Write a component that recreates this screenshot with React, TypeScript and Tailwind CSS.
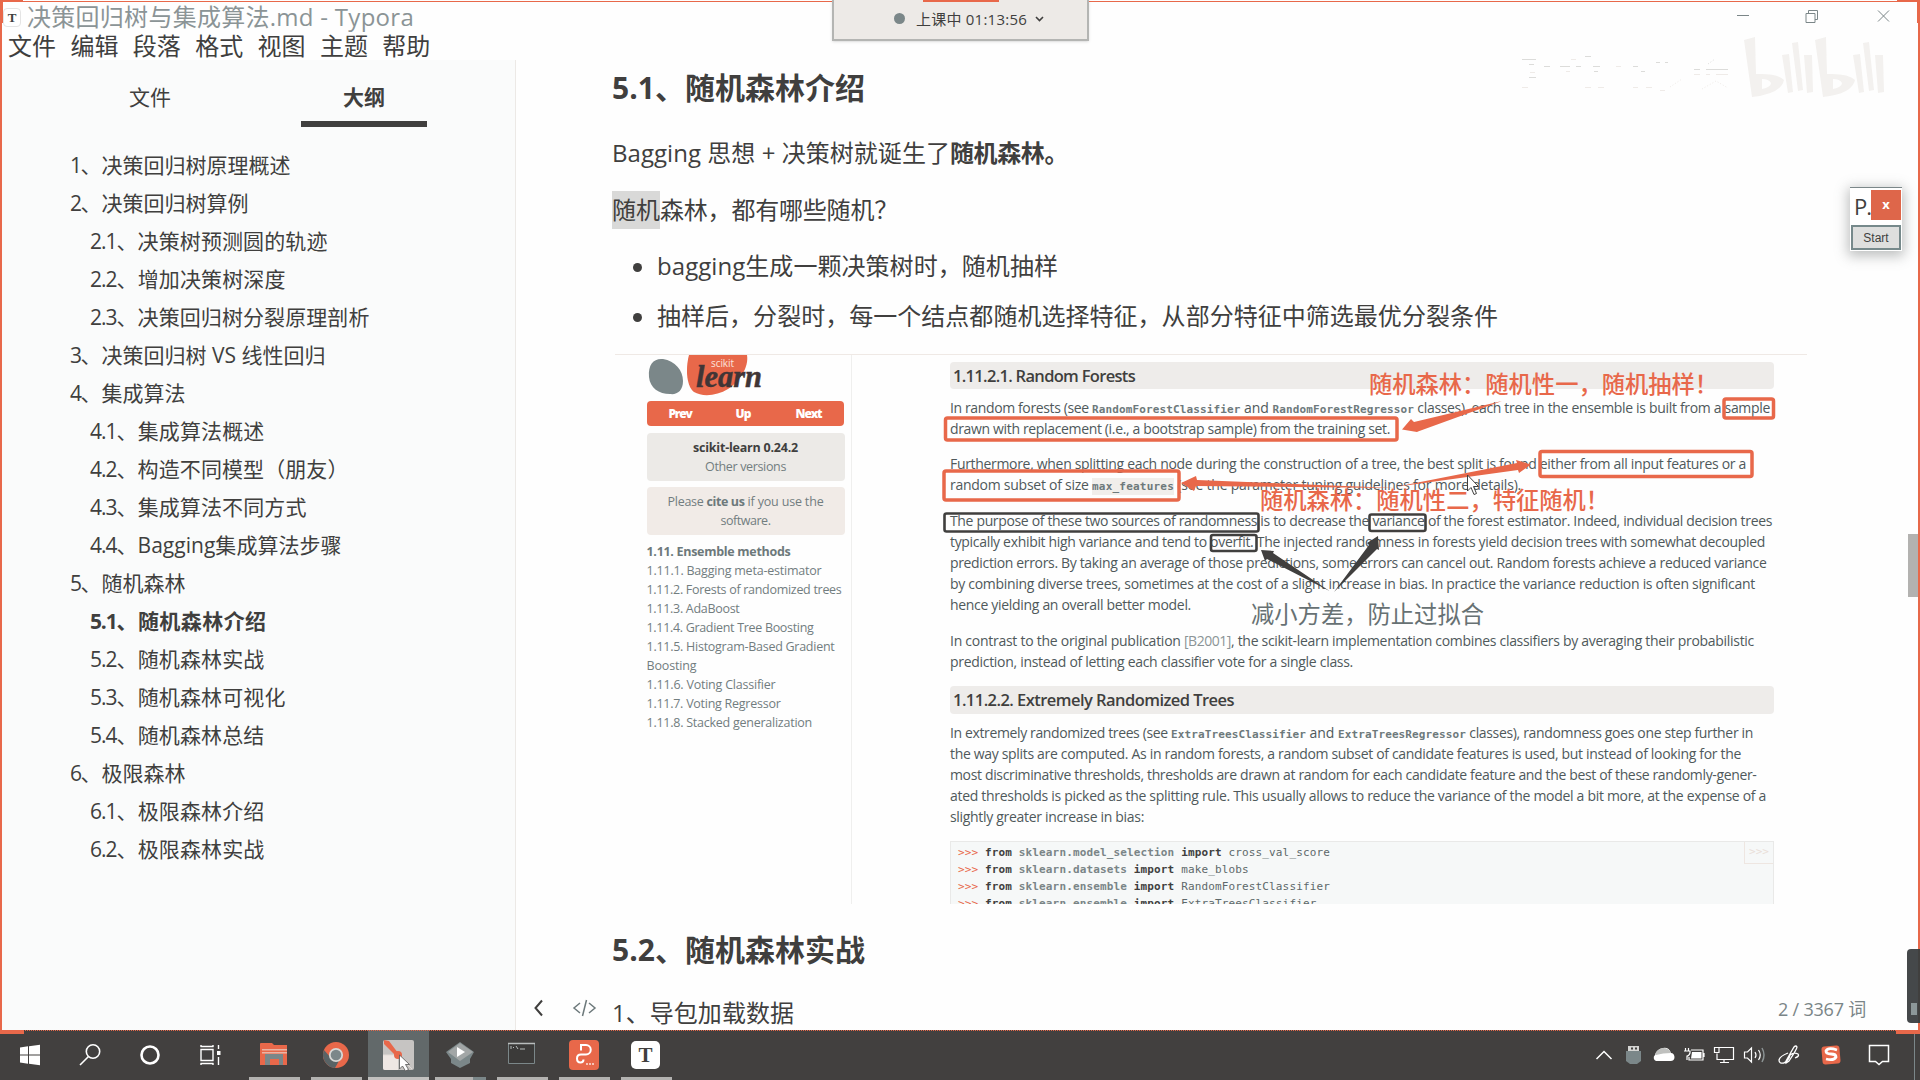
import React, { useLayoutEffect, useRef } from "react";

/* A single run of text spaced so that it spans exactly `w` pixels. */
function Fit({ w, children, className = "" }: { w: number; children: string; className?: string }) {
  const ref = useRef<HTMLSpanElement>(null);
  useLayoutEffect(() => {
    const el = ref.current;
    if (!el) return;
    el.style.letterSpacing = "0px";
    const natural = el.getBoundingClientRect().width;
    el.style.letterSpacing = `${(w - natural) / Array.from(children).length}px`;
  }, [w, children]);
  return (
    <span ref={ref} className={`inline-block shrink-0 whitespace-pre ${className}`}>
      {children}
    </span>
  );
}

const outline: { t: string; sub?: boolean; on?: boolean; w: number }[] = [
  { t: "1、决策回归树原理概述", w: 221 },
  { t: "2、决策回归树算例", w: 179 },
  { t: "2.1、决策树预测圆的轨迹", w: 238, sub: true },
  { t: "2.2、增加决策树深度", w: 196, sub: true },
  { t: "2.3、决策回归树分裂原理剖析", w: 280, sub: true },
  { t: "3、决策回归树 VS 线性回归", w: 256 },
  { t: "4、集成算法", w: 116 },
  { t: "4.1、集成算法概述", w: 175, sub: true },
  { t: "4.2、构造不同模型（朋友）", w: 259, sub: true },
  { t: "4.3、集成算法不同方式", w: 217, sub: true },
  { t: "4.4、Bagging集成算法步骤", w: 252, sub: true },
  { t: "5、随机森林", w: 116 },
  { t: "5.1、随机森林介绍", w: 177, sub: true, on: true },
  { t: "5.2、随机森林实战", w: 175, sub: true },
  { t: "5.3、随机森林可视化", w: 196, sub: true },
  { t: "5.4、随机森林总结", w: 175, sub: true },
  { t: "6、极限森林", w: 116 },
  { t: "6.1、极限森林介绍", w: 175, sub: true },
  { t: "6.2、极限森林实战", w: 175, sub: true },
];

/* The numeral before the "、" is set a little tighter than the title that follows. */
function OutlineText({ t, w }: { t: string; w: number }) {
  const cut = t.indexOf("、");
  const lead = cut === 1 ? 10.5 : 26.5;
  return (
    <>
      <Fit w={lead}>{t.slice(0, cut)}</Fit>
      <Fit w={w - lead - 0.5}>{t.slice(cut)}</Fit>
    </>
  );
}

function TitleBar() {
  return (
    <header className="flex h-[60px] shrink-0 justify-between">
      <div>
        <div className="flex h-[34px] items-center pl-px">
          <span className="flex h-[19px] w-[18px] items-center justify-center rounded border border-[#e4e4e4] bg-white font-['Liberation_Serif'] text-[13px] leading-none font-bold text-[#403f3e]">
            T
          </span>
          <Fit w={387} className="ml-[6px] text-2xl leading-[34px] text-[#8b9496]">
            决策回归树与集成算法.md - Typora
          </Fit>
        </div>
        <nav className="flex h-[24px] items-center gap-[14.4px] pl-[6px] text-2xl leading-6">
          {["文件", "编辑", "段落", "格式", "视图", "主题", "帮助"].map((m) => (
            <span key={m}>{m}</span>
          ))}
        </nav>
      </div>
      <svg className="mt-[8px] mr-[26px] h-4 w-[156px]" viewBox="0 0 156 16" fill="none" stroke="#7b8688">
        <path d="M1 7.500h12M70 5.500h9v9h-9zM72.500 5v-2.500h9v9h-2.500M142 2.500l11 11M153 2.500l-11 11" />
      </svg>
    </header>
  );
}

function Sidebar() {
  return (
    <aside className="w-[514px] shrink-0 border-r border-[#ece9e6] bg-[#fafbfb]">
      <div className="flex pl-[85px] text-[21px] leading-[75px]">
        <div className="h-[67px] w-[126px] text-center">文件</div>
        <div className="ml-[88px] h-[67px] w-[126px] border-b-[6px] border-[#403f3e] text-center font-bold">
          大纲
        </div>
      </div>
      <ul className="mt-[18.5px] pl-[68px] text-[21px]">
        {outline.map((o) => (
          <li key={o.t} className={`flex h-[38.04px] items-center leading-[38px] ${o.sub ? "pl-[20px]" : ""} ${o.on ? "font-bold" : ""}`}>
            <OutlineText t={o.t} w={o.w} />
          </li>
        ))}
      </ul>
    </aside>
  );
}

function Bullet({ children, w }: { children: string; w: number }) {
  return (
    <div className="flex items-center">
      <i className="ml-[21px] mr-[15px] h-[9px] w-[9px] rounded-full bg-[#403f3e]" />
      <Fit w={w} className="relative -top-px">{children}</Fit>
    </div>
  );
}

function Line({ w, children }: { w: number; children: string }) {
  return (
    <div className="flex h-[21px] items-center leading-[21px]">
      <Fit w={w}>{children}</Fit>
    </div>
  );
}

const mono = "font-['DejaVu_Sans_Mono'] font-bold text-[11px] text-[#6d797b]";

function DocNav() {
  const items: [string, number][] = [
    ["1.11.1. Bagging meta-estimator", 175],
    ["1.11.2. Forests of randomized trees", 195],
    ["1.11.3. AdaBoost", 93],
    ["1.11.4. Gradient Tree Boosting", 167],
    ["1.11.5. Histogram-Based Gradient", 188],
    ["Boosting", 50],
    ["1.11.6. Voting Classifier", 129],
    ["1.11.7. Voting Regressor", 134],
    ["1.11.8. Stacked generalization", 165.5],
  ];
  return (
    <div className="w-[237px] shrink-0 border-r border-[#efefee] pl-[31.5px] text-[12.5px] text-[#727d7f]">
      <svg className="block h-[46px] w-[130px]" viewBox="0 0 130 46">
        <path d="M2 22C1 9 7 3 16 4c12 2 20 11 20 22 0 10-6 14-13 13C12 39 3 33 2 22z" fill="#7b8789" />
        <path d="M42 0h58c2 12-7 26-19 34-11 7-26 8-34 3-7-5-9-22-5-37z" fill="#e8684a" />
        <text x="64" y="12" fontFamily="Open Sans" fontSize="10" fill="#fbe3dc" textLength="23">scikit</text>
        <text
          x="49"
          y="32"
          fontFamily="Liberation Serif"
          fontStyle="italic"
          fontWeight="bold"
          fontSize="31"
          fill="#403536"
          stroke="#403536"
          strokeWidth=".5"
          textLength="66"
          lengthAdjust="spacingAndGlyphs"
        >
          learn
        </text>
      </svg>
      <div className="flex h-[25px] w-[197px] items-center rounded-sm bg-[#e8684a] pl-[22px] text-[12px] font-extrabold text-white">
        <Fit w={23}>Prev</Fit>
        <Fit w={15} className="ml-[44px]">Up</Fit>
        <Fit w={26} className="ml-[45px]">Next</Fit>
      </div>
      <div className="mt-[7px] flex h-[48px] w-[198px] flex-col items-center justify-center rounded bg-[#eceae7] leading-[19px]">
        <Fit w={105} className="font-bold text-[#403f3e]">scikit-learn 0.24.2</Fit>
        <Fit w={81}>Other versions</Fit>
      </div>
      <div className="mt-[6px] flex h-[48px] w-[198px] flex-col items-center justify-center rounded bg-[#f1ebe7] leading-[19px]">
        <div className="flex">
          <Fit w={39}>{"Please "}</Fit>
          <Fit w={38} className="font-bold text-[#6d797b]">cite us</Fit>
          <Fit w={79}>{" if you use the"}</Fit>
        </div>
        <Fit w={50}>software.</Fit>
      </div>
      <div className="mt-[7px] leading-[19px]">
        <div className="h-[19px]">
          <Fit w={144} className="font-bold text-[#6d797b]">1.11. Ensemble methods</Fit>
        </div>
        {items.map(([t, w]) => (
          <div key={t} className="h-[19.05px]">
            <Fit w={w}>{t}</Fit>
          </div>
        ))}
      </div>
    </div>
  );
}

function CodeLine({ mod, name }: { mod: string; name: string }) {
  return (
    <div className="flex h-[17px] leading-[17px]">
      <Fit w={27} className="text-[#e8684a]">{">>> "}</Fit>
      <Fit w={33.8} className="font-bold">{"from "}</Fit>
      <Fit w={mod.length * 6.765} className="font-bold text-[#7a8587]">{mod}</Fit>
      <Fit w={54.1} className="font-bold">{" import "}</Fit>
      <Fit w={name.length * 6.765} className="text-[#5d686a]">{name}</Fit>
    </div>
  );
}

function Annotations() {
  return (
    <svg className="absolute -top-px left-0 h-[550px] w-[1191px]" viewBox="615 354 1191 550">
      <g fill="none" stroke="#e8684a" strokeWidth="3.500">
        <rect x="1724" y="399" width="49.500" height="19" rx="2" />
        <rect x="945.500" y="418" width="451.500" height="22" rx="2" />
        <rect x="1540" y="451.500" width="212" height="25" rx="2" />
        <rect x="944" y="471" width="235" height="29" rx="2" />
      </g>
      <g fill="none" stroke="#403f3e" strokeWidth="2.600">
        <rect x="944.500" y="513.500" width="314" height="18" rx="2" />
        <rect x="1369.500" y="514.500" width="56" height="16.500" rx="2" />
        <rect x="1211" y="535" width="45.500" height="16" rx="2" />
      </g>
      <g fill="#e8684a">
        <path d="M1502 401L1418 431.500L1417 432L1402 429.500L1411 419L1414 422z" />
        <path d="M1395 487L1518 470L1519 473L1531 464.500L1516 460L1517 463z" />
        <path d="M1395 488L1196 486L1194 491L1181 483L1196 476L1197 480z" />
      </g>
      <g fill="#403f3e">
        <path d="M1329.500 591L1273 553L1274 551L1261 550L1265 561L1267 559z" />
        <path d="M1334 592L1377 549L1379 550L1378 536L1367 543L1369 545z" />
      </g>
    </svg>
  );
}

function Figure() {
  return (
    <figure className="relative ml-[3px] flex h-[550px] w-[1192px] overflow-hidden border-t border-[#efe9e5]">
      <DocNav />
      <div className="ml-[98px] w-[824px] shrink-0 text-[14px] text-[#4f595b]">
        <h3 className="mt-[7px] flex h-[27px] items-center rounded-sm bg-[#eeecea] pl-[3px] text-[16.500px] font-semibold text-[#403f3e]">
          <Fit w={182}>1.11.2.1. Random Forests</Fit>
        </h3>
        <div className="mt-[8px] flex h-[21px] items-baseline leading-[21px]">
          <Fit w={142}>{"In random forests (see "}</Fit>
          <Fit w={148.500} className={mono}>RandomForestClassifier</Fit>
          <Fit w={32}>{" and "}</Fit>
          <Fit w={141.500} className={mono}>RandomForestRegressor</Fit>
          <Fit w={356}>{" classes), each tree in the ensemble is built from a sample"}</Fit>
        </div>
        <Line w={440}>drawn with replacement (i.e., a bootstrap sample) from the training set.</Line>
        <div className="h-[14px]" />
        <Line w={796}>Furthermore, when splitting each node during the construction of a tree, the best split is found either from all input features or a</Line>
        <div className="flex h-[21px] items-baseline leading-[21px]">
          <Fit w={142}>{"random subset of size "}</Fit>
          <Fit w={82} className={mono + " bg-[#f1eeeb] leading-[17px]"}>max_features</Fit>
          <Fit w={347}>{" (see the parameter tuning guidelines for more details)."}</Fit>
        </div>
        <div className="h-[15px]" />
        <Line w={822}>The purpose of these two sources of randomness is to decrease the variance of the forest estimator. Indeed, individual decision trees</Line>
        <Line w={815}>typically exhibit high variance and tend to overfit. The injected randomness in forests yield decision trees with somewhat decoupled</Line>
        <Line w={816.500}>prediction errors. By taking an average of those predictions, some errors can cancel out. Random forests achieve a reduced variance</Line>
        <Line w={805}>by combining diverse trees, sometimes at the cost of a slight increase in bias. In practice the variance reduction is often significant</Line>
        <Line w={241}>hence yielding an overall better model.</Line>
        <div className="mt-[15px] flex h-[21px] items-baseline leading-[21px]">
          <Fit w={234}>{"In contrast to the original publication "}</Fit>
          <Fit w={47} className="text-[#8b9496]">[B2001]</Fit>
          <Fit w={523}>, the scikit-learn implementation combines classifiers by averaging their probabilistic</Fit>
        </div>
        <Line w={403}>prediction, instead of letting each classifier vote for a single class.</Line>
        <h3 className="mt-[14px] flex h-[28px] items-center rounded-sm bg-[#eeecea] pl-[3px] text-[16.500px] font-semibold text-[#403f3e]">
          <Fit w={281}>1.11.2.2. Extremely Randomized Trees</Fit>
        </h3>
        <div className="mt-[8px] flex h-[21px] items-baseline leading-[21px]">
          <Fit w={221}>{"In extremely randomized trees (see "}</Fit>
          <Fit w={135} className={mono}>ExtraTreesClassifier</Fit>
          <Fit w={32}>{" and "}</Fit>
          <Fit w={128} className={mono}>ExtraTreesRegressor</Fit>
          <Fit w={287}>{" classes), randomness goes one step further in"}</Fit>
        </div>
        <Line w={791}>the way splits are computed. As in random forests, a random subset of candidate features is used, but instead of looking for the</Line>
        <Line w={806.500}>most discriminative thresholds, thresholds are drawn at random for each candidate feature and the best of these randomly-gener-</Line>
        <Line w={816}>ated thresholds is picked as the splitting rule. This usually allows to reduce the variance of the model a bit more, at the expense of a</Line>
        <Line w={194}>slightly greater increase in bias:</Line>
        <div className="mt-[14px] flex h-[80px] justify-between border border-[#e9e9e8] bg-[#f6f8f8] pl-[7px] font-['DejaVu_Sans_Mono'] text-[11px] text-[#403f3e]">
          <div className="pt-[2px]">
            <CodeLine mod="sklearn.model_selection" name="cross_val_score" />
            <CodeLine mod="sklearn.datasets" name="make_blobs" />
            <CodeLine mod="sklearn.ensemble" name="RandomForestClassifier" />
            <CodeLine mod="sklearn.ensemble" name="ExtraTreesClassifier" />
          </div>
          <div className="h-[22px] w-[29px] border-b border-l border-[#eee6e1] text-center leading-[20px] text-[#eadfd9]">
            {">>>"}
          </div>
        </div>
      </div>
      <Annotations />
      <Fit w={349} className="absolute top-[13px] left-[754px] text-[23.300px] leading-8 font-medium text-[#e8684a]">
        随机森林：随机性一，随机抽样！
      </Fit>
      <Fit w={349} className="absolute top-[129px] left-[645px] text-[23.300px] leading-8 font-medium text-[#e8684a]">
        随机森林：随机性二，特征随机！
      </Fit>
      <Fit w={233} className="absolute top-[243px] left-[636px] text-[23.300px] leading-8 text-[#677173]">
        减小方差，防止过拟合
      </Fit>
    </figure>
  );
}

function Main() {
  return (
    <main className="relative min-w-0 flex-1 overflow-hidden pl-[96px] text-2xl leading-[34px]">
      <h2 className="flex h-[56px] items-center text-[30px] font-bold">
        <Fit w={253}>5.1、随机森林介绍</Fit>
      </h2>
      <p className="flex h-[73px] items-center">
        <Fit w={338}>Bagging 思想 + 决策树就诞生了</Fit>
        <Fit w={118} className="font-bold">随机森林。</Fit>
      </p>
      <p className="flex h-[41px] items-center">
        <span className="flex h-[38px] items-center bg-[#d9d9d8]">随机</span>
        <Fit w={238}>森林，都有哪些随机？</Fit>
      </p>
      <div className="flex h-[74px] items-center">
        <Bullet w={401}>bagging生成一颗决策树时，随机抽样</Bullet>
      </div>
      <div className="flex h-[26px] items-center">
        <Bullet w={841}>抽样后，分裂时，每一个结点都随机选择特征，从部分特征中筛选最优分裂条件</Bullet>
      </div>
      <div className="h-[24px]" />
      <Figure />
      <h2 className="flex h-[91px] items-center text-[30px] font-bold">
        <Fit w={253}>5.2、随机森林实战</Fit>
      </h2>
      <p className="flex h-[36px] items-center">
        <Fit w={182}>1、导包加载数据</Fit>
      </p>
      <svg className="absolute bottom-[12px] left-[16px] h-[20px] w-[66px]" viewBox="0 0 66 20" fill="none" strokeWidth="1.800">
        <path d="M10 2.500L3.500 10l6.500 7.500" stroke="#403f3e" strokeWidth="2" />
        <path d="M48 5l-6 5 6 5M57 5l6 5-6 5M54.500 2l-4 16" stroke="#6d797b" strokeWidth="1.500" />
      </svg>
      <Fit w={88} className="absolute right-[52px] bottom-[5px] text-[18px] leading-8 text-[#7a8587]">
        2 / 3367 词
      </Fit>
      <div className="absolute top-[474px] right-0 h-[63px] w-[10px] bg-[#b3b2b0]" />
    </main>
  );
}

function Taskbar() {
  return (
    <footer className="flex h-[50px] shrink-0 items-stretch bg-[#42403f]">
      <svg className="h-[50px] w-[249px]" viewBox="0 0 249 50" fill="none" stroke="#fff" strokeWidth="1.600">
        <path d="M20 17.500l8-1.200v8.200h-8zM29 16.200l11-1.500v9.800H29zM20 25.500h8v8.200l-8-1.200zM29 25.500h11v9.800l-11-1.500z" fill="#fff" stroke="none" />
        <circle cx="93" cy="21.500" r="6.700" />
        <path d="M88.500 26.500L80 35" />
        <circle cx="150" cy="25" r="8.500" strokeWidth="2.600" />
        <path d="M201 19.500h12v11h-12zM201 15v2M213 15v2M200.500 16.500h13M200.500 33.500h13M201 35v-2M213 35v-2M218.500 15v4M218.500 27v8" strokeWidth="1.400" />
        <path d="M217 21h3.500v4H217z" fill="#fff" stroke="none" />
      </svg>
      <svg className="h-[50px] w-[431px]" viewBox="249 0 431 50">
        <g fill="#b3b2b0">
          <path d="M249 47h51v3h-51zM311 47h51v3h-51zM435 47h38v3h-38zM497 47h51v3h-51zM559 47h51v3h-51zM621 47h51v3h-51z" />
        </g>
        <path d="M473 47h13v3h-13z" fill="#7b8789" />
        <path d="M368 0h61v50h-61z" fill="#62696a" />
        <path d="M368 47h61v3h-61z" fill="#c2c1bf" />
        <path d="M260 14q0-1 1-1h11l2 2h13v20h-27z" fill="#e8684a" />
        <path d="M262 19h25v1.500h-25zM262 22h25v1.500h-25z" fill="#e9b5a6" />
        <path d="M265 24h18v11h-4v-6h-9v6h-5z" fill="#7b8789" />
        <path d="M270 30h8v4h-8z" fill="#e8684a" />
        <circle cx="336" cy="25" r="13" fill="#e8684a" />
        <path d="M324 20a13 13 0 0 0 11 18l5-9-9-1z" fill="#596365" />
        <circle cx="336" cy="25" r="6.200" fill="#7b8789" stroke="#d8d8d6" strokeWidth="1.800" />
        <rect x="383" y="10" width="31" height="30" rx="2" fill="#c6c4c2" />
        <path d="M383 25h15v15h-13q-2 0-2-2z" fill="#eee7e3" />
        <path d="M383 25h15l14 14" stroke="#e3ddd9" fill="none" />
        <path d="M384 10l5 1 9 12-2 3-12-12z" fill="#e8684a" />
        <circle cx="398" cy="25" r="4" fill="#e8684a" />
        <path d="M399.500 25v14l3-3 3 5 3-1.500-3-5h4z" fill="#fff" stroke="#555" strokeWidth=".8" />
        <path d="M460 12l14 10-4 7v4l-10 5-9-5v-4l-5-7z" fill="#7b8789" />
        <path d="M460 13l13 9-13 9-12-9z" fill="#a2a6a6" />
        <path d="M457 17l8 5-8 5z" fill="#fff" />
        <path d="M508.500 13.500h26v20h-26z" fill="#3b3a39" stroke="#7b8789" />
        <path d="M508 13.500h27" stroke="#b9bdbd" strokeWidth="1.500" />
        <path d="M511 16v3M513 17.500h1M516 16l2 3M520 19h5" stroke="#b9bdbd" fill="none" />
        <rect x="569" y="10" width="30" height="30" rx="4" fill="#e8684a" />
        <path d="M581 20.500V15h5a4.700 4.700 0 0 1 0 9.500h-5q-4 0-4 4t3.500 4q3 0 3-3" fill="none" stroke="#fff" strokeWidth="2" />
        <path d="M586 34h9" stroke="#f6c3b6" strokeDasharray="2 1" strokeWidth="2" />
        <rect x="631" y="11" width="29" height="28" rx="5" fill="#fff" />
        <text x="645.500" y="32" textAnchor="middle" fontFamily="Liberation Serif" fontWeight="bold" fontSize="21" fill="#403f3e">T</text>
      </svg>
      <div className="flex-1" />
      <svg className="h-[50px] w-[336px]" viewBox="1584 0 336 50" fill="none" stroke="#fff" strokeWidth="1.500">
        <path d="M1596.500 29l7.500-7.500 7.500 7.500" />
        <path d="M1628 16h11v5h-11z" fill="#d5d5d3" stroke="none" />
        <path d="M1631 17.500h2v2h-2zM1635 17.500h2v2h-2z" fill="#42403f" stroke="none" />
        <path d="M1626 21h15v10l-4 3h-7l-4-3z" fill="#7b8789" stroke="none" />
        <path d="M1656 31a3.500 3.500 0 0 1-1-6q2-6 8-7 6-1 8 5 3 0 3.500 4 0 4-4 4z" fill="#fff" stroke="none" />
        <path d="M1655 24q2-5 8-6 6 0 8 5-8 0-15 2z" fill="#bfc0be" stroke="none" />
        <path d="M1691 20h12v10h-14v-3M1704 23v4M1685.500 18v3M1688.500 18v3M1684 21h6v2q-1 3-3 3v4" strokeWidth="1.200" />
        <path d="M1692 22h9.500v6.500H1691z" fill="#fff" stroke="none" />
        <path d="M1719 17.500h14.500v12H1717v-6M1714.500 17.500h4.500v5h-4.500zM1724 30v2.500M1720 32.500h9" strokeWidth="1.200" />
        <path d="M1744.500 22h3l4-4v14l-4-4h-3zM1755 22q2 3 0 6M1758.500 20q3.500 5 0 10" strokeWidth="1.200" />
        <path d="M1762 18q4 7 0 14" stroke="#8c9394" />
        <path d="M1786 31l8-14q2-2 3 0 0 2-8 14l-3 2zM1788 23q-8 3-9 7 0 4 5 3 5-3 6-8 4-3 8-1 2 2-3 4" strokeWidth="1.300" />
        <rect x="1822" y="16" width="18" height="18" rx="3" fill="#e8684a" stroke="none" transform="rotate(-5 1831 25)" />
        <path d="M1837 20q-9-3-11 1 0 3 5 3t5 3q-2 4-10 2" strokeWidth="2.800" />
        <path d="M1869.500 15.500h19v16h-6l-3.500 3-3.500-3h-6z" />
        <path d="M1914.500 4v46" stroke="#7b8789" strokeWidth="1" />
      </svg>
    </footer>
  );
}

/* Faint broadcast mark in the top right corner. */
function Watermark() {
  return (
    <svg className="absolute top-[25px] left-[1510px] h-[90px] w-[390px]" viewBox="0 0 390 90" fill="none">
      <g stroke="#dcdcda" strokeWidth="1">
        <path d="M12 34.500h14M19 39.500h5M19 52.500h7M34 41.500h6M50 41.500h10M66 41.500h5M75 31.500h6M83 41.500h7M123 41.500h5M146 37.500h4M155 37.500h3M184 44.500h6M196 44.500h22M131 46.500h4M84 46.500h4" />
        <path d="M198 39l7-5" strokeDasharray="1 2" />
      </g>
      <g stroke="#efebe8">
        <path d="M12 62.500h6M75 62.500h6M88 62.500h6M123 62.500h5M136 62.500h6M184 49.500h6M196 49.500h4M206 49.500h12M61 34.500h5M106 41.500h5M20 47.500h5M56 46.500h4M150 65.500h5" />
        <path d="M160 62l12-8M192 64l14-8 12 7" strokeDasharray="1 2" />
      </g>
      {[0, 71].map((dx) => (
        <g key={dx} transform={`translate(${dx} 0)`} fill="#f3f1ef">
          <path fillRule="evenodd" d="M234 15l11-3 1 37q21-1 28 6-3 14-32 17zM252 54v10q9-2 9-6-2-4-9-4z" />
          <path d="M272 30l7-1 4 38-5 1zM282 18l6-1 5 48-5 1zM294 30h8l1 37-6 1z" />
        </g>
      ))}
    </svg>
  );
}

export default function App() {
  return (
    <div
      lang="zh-CN"
      className="relative flex h-[1080px] w-[1920px] flex-col overflow-hidden bg-[#fefefe] font-['Open_Sans','Noto_Sans_CJK_SC',sans-serif] text-[#403f3e]"
    >
      <div className="flex h-[1030px] flex-col border-x-2 border-[#e8684a]">
        <TitleBar />
        <div className="flex min-h-0 flex-1">
          <Sidebar />
          <Main />
        </div>
      </div>
      <Taskbar />

      <div className="absolute inset-x-0 top-px h-px bg-[#e8684a]" />
      <div className="absolute top-0 left-0 h-[23px] w-[23px] border-t-2 border-l-[3px] border-[#e8684a]" />
      <div className="absolute top-0 right-0 h-[23px] w-[23px] border-t-2 border-r-[3px] border-[#e8684a]" />
      <div className="absolute inset-x-0 top-[1030px] border-t border-dotted border-[#e8684a]" />
      <div className="absolute top-[1010px] left-0 h-[24px] w-[24px] border-b-4 border-l-2 border-[#e8684a]" />
      <div className="absolute top-[1010px] right-0 h-[24px] w-[24px] border-r-2 border-b-4 border-[#e8684a]" />

      <div className="absolute top-0 left-[832px] flex h-[41px] w-[257px] items-center border-2 border-t-0 border-[#b4b5b3] bg-[#edeae7] pb-[2px] text-[15px] shadow-sm">
        <i className="ml-[60px] h-[11px] w-[11px] rounded-full bg-[#7b8789]" />
        <Fit w={111} className="ml-[11px] leading-5">上课中 01:13:56</Fit>
        <svg className="ml-[8px] h-[8px] w-[9px]" viewBox="0 0 9 8" fill="none" stroke="#403f3e" strokeWidth="1.600">
          <path d="M1 2l3.500 3.500L8 2" />
        </svg>
      </div>
      <div className="absolute top-0 left-[923px] h-[2px] w-[76px] bg-[#e8684a]" />

      <Watermark />

      <div className="absolute top-[187px] left-[1850px] w-[52px] border-t border-[#7b8789] bg-white p-px shadow-[0_3px_12px_2px_rgba(90,95,95,0.4)]">
        <div className="flex h-[36px] justify-between pt-px">
          <span className="w-[20px] overflow-hidden pl-[3px] text-[22px] leading-[32px] font-medium tracking-tighter whitespace-nowrap">P.</span>
          <span className="flex h-[30px] w-[30px] items-center justify-center bg-[#de664a] pb-[2px] text-[13px] leading-none font-bold text-white">
            x
          </span>
        </div>
        <div className="flex h-[25px] items-center justify-center border-2 border-[#76898b] bg-[#dedfde] font-['Liberation_Sans'] text-[12px]">
          Start
        </div>
      </div>

      <div className="absolute top-[949px] right-0 flex h-[74px] w-[13px] items-end rounded-l border-r-2 border-[#403f3e] bg-[#45484a] pb-[8px] pl-[4px]">
        <i className="h-[12px] w-[6px] bg-[#8c9799]" />
      </div>

      <svg className="absolute top-[474px] left-[1466px] h-[22px] w-[15px]" viewBox="0 0 15 22">
        <path d="M1.500 1v16l3.500-3.500 3 7 2.500-1-3-7h5z" fill="#fff" stroke="#403f3e" />
      </svg>
    </div>
  );
}
